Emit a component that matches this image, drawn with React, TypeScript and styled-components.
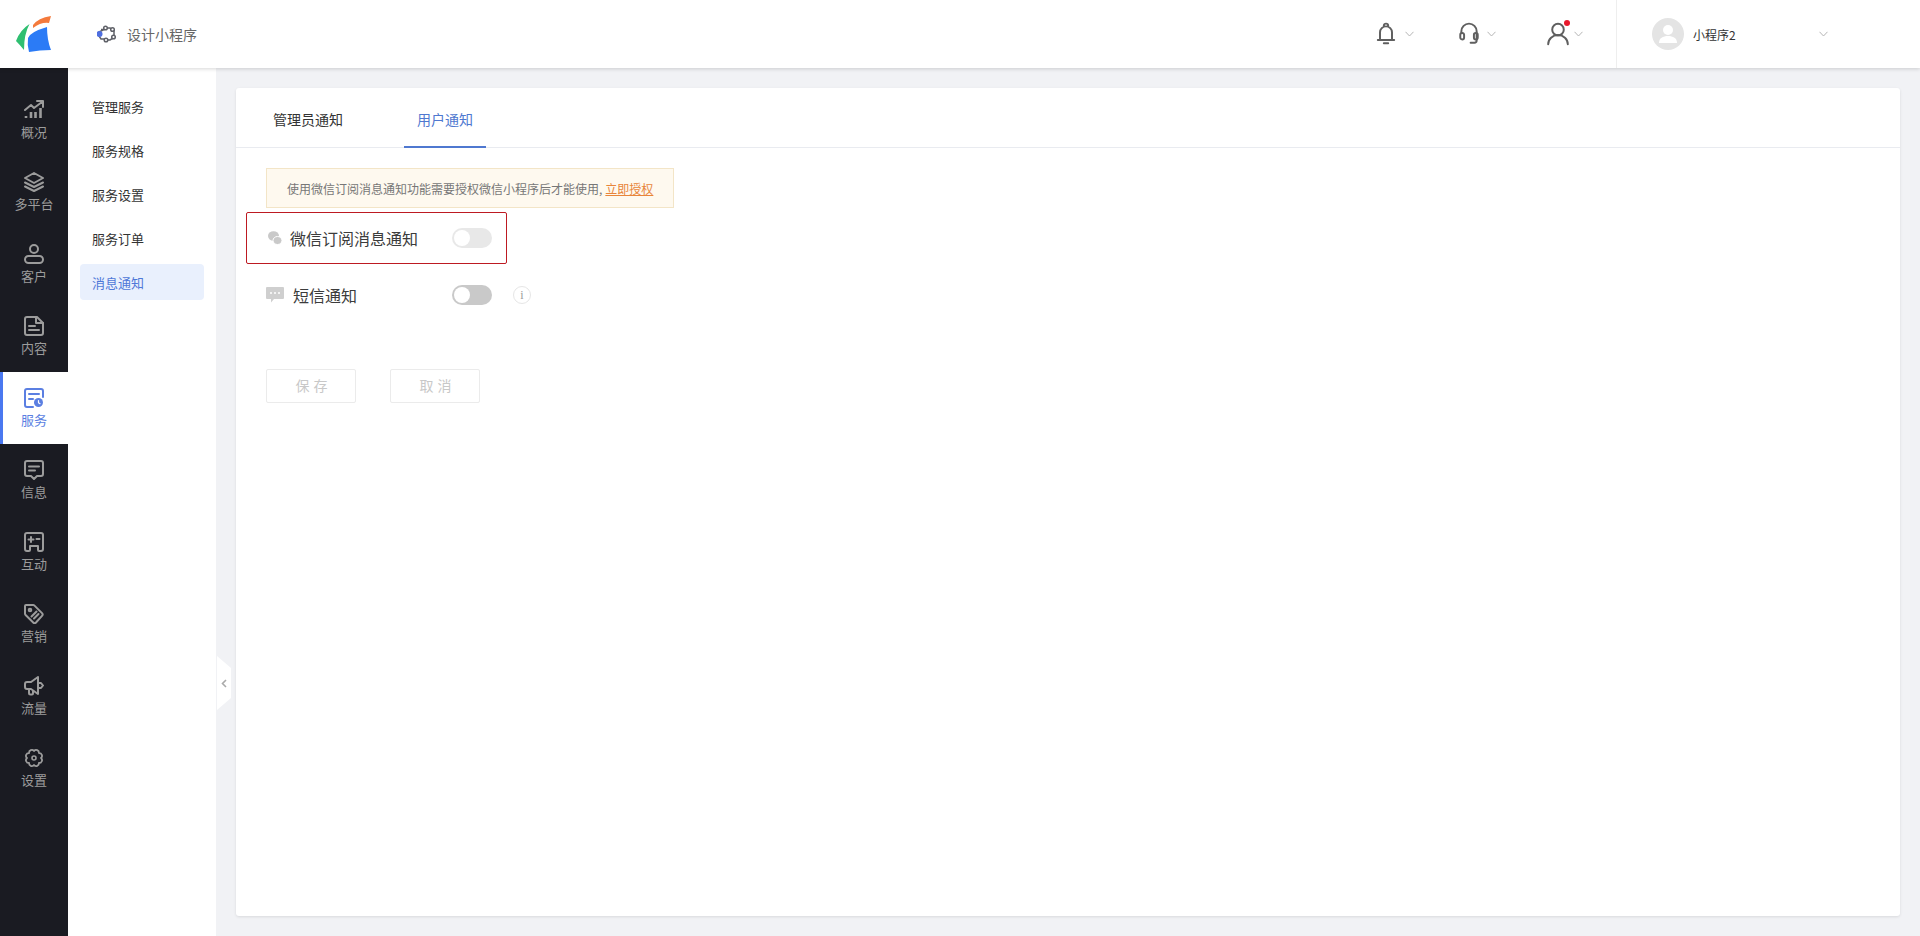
import { FunctionComponent, ReactNode } from "react";
import styled, { createGlobalStyle } from "styled-components";

const GlobalStyle = createGlobalStyle`
  html, body {
    margin: 0;
    padding: 0;
    height: 100%;
    overflow: hidden;
    background: #f1f2f5;
    font-family: "Noto Sans CJK SC", "Noto Sans", "Liberation Sans", sans-serif;
  }
  #root {
    height: 100%;
  }
  * {
    box-sizing: border-box;
  }
`;

const Page = styled.div`
  display: flex;
  flex-direction: column;
  width: 1920px;
  height: 936px;
`;
const Header = styled.header`
  position: relative;
  z-index: 2;
  flex: 0 0 68px;
  display: flex;
  align-items: stretch;
  background: #fff;
  box-shadow: 0 1px 4px rgba(0, 0, 0, 0.16);
`;
const LogoBox = styled.div`
  flex: 0 0 97px;
  display: flex;
  align-items: center;
  padding-left: 14px;
`;
const ProjectName = styled.div`
  display: flex;
  align-items: center;
  gap: 10px;
  font-size: 14px;
  color: #666;
`;
const Spacer = styled.div`
  flex: 1;
`;
const Action = styled.div<{ $width: number; $gap: number }>`
  position: relative;
  width: ${(p) => p.$width}px;
  display: flex;
  align-items: center;
  gap: ${(p) => p.$gap}px;
`;
const RedDot = styled.span`
  position: absolute;
  top: 20px;
  left: 17px;
  width: 6px;
  height: 6px;
  border-radius: 50%;
  background: #e8192c;
`;
const Account = styled.div`
  flex: 0 0 304px;
  display: flex;
  align-items: center;
  padding-left: 35px;
  border-left: 1px solid #eeeeee;
  font-size: 12px;
  color: #333;
`;
const AccountName = styled.div`
  width: 126px;
  margin-left: 9px;
`;
const Body = styled.div`
  flex: 1;
  min-height: 0;
  display: flex;
`;
const Rail = styled.nav`
  flex: 0 0 68px;
  padding-top: 16px;
  background: #1a1b22;
`;
const RailItem = styled.div<{ $active?: boolean }>`
  height: 72px;
  display: flex;
  flex-direction: column;
  align-items: center;
  padding-top: 16px;
  padding-right: 3px;
  gap: 3px;
  font-size: 13px;
  line-height: 18px;
  color: ${(p) => (p.$active ? "#5b7fe2" : "#9c9c9c")};
  background: ${(p) => (p.$active ? "#fff" : "transparent")};
  border-left: 3px solid ${(p) => (p.$active ? "#4a78f0" : "transparent")};
`;
const SubNav = styled.nav`
  flex: 0 0 148px;
  display: flex;
  flex-direction: column;
  gap: 8px;
  padding: 20px 12px 0;
  background: #fff;
`;
const SubItem = styled.div<{ $active?: boolean }>`
  height: 36px;
  display: flex;
  align-items: center;
  padding-left: 12px;
  border-radius: 4px;
  font-size: 13px;
  color: ${(p) => (p.$active ? "#4f78d8" : "#333")};
  background: ${(p) => (p.$active ? "#e9f0fd" : "transparent")};
`;
const Main = styled.main`
  position: relative;
  flex: 1;
  display: flex;
  padding: 20px;
  background: #f1f2f5;
`;
const CollapseHandle = styled.div`
  position: absolute;
  top: 588px;
  left: 1px;
  width: 14px;
  height: 54px;
  display: flex;
  align-items: center;
  justify-content: center;
  background: #fff;
  clip-path: polygon(0 0, 100% 22%, 100% 78%, 0 100%);
`;
const Card = styled.section`
  flex: 1;
  background: #fff;
  border-radius: 3px;
  box-shadow: 0 1px 3px rgba(0, 0, 0, 0.1);
`;
const TabBar = styled.div`
  height: 60px;
  display: flex;
  gap: 48px;
  padding-left: 24px;
  border-bottom: 1px solid #e9ebf0;
`;
const Tab = styled.div<{ $active?: boolean }>`
  height: 60px;
  display: flex;
  align-items: center;
  padding: 3px 13px 0;
  font-size: 14px;
  color: ${(p) => (p.$active ? "#4f78d0" : "#333")};
  border-bottom: 2px solid ${(p) => (p.$active ? "#4f78d0" : "transparent")};
`;
const Content = styled.div`
  padding: 20px 30px 0;
`;
const Notice = styled.div`
  width: 408px;
  height: 40px;
  display: flex;
  align-items: center;
  gap: 3px;
  padding-left: 20px;
  font-size: 12px;
  color: #777;
  background: #fef9ef;
  border: 1px solid #f3e5c7;
`;
const NoticeLink = styled.span`
  color: #e8853a;
  text-decoration: underline;
`;
const Row = styled.div<{ $highlight?: boolean }>`
  display: flex;
  align-items: center;
  height: ${(p) => (p.$highlight ? 52 : 58)}px;
  margin-top: ${(p) => (p.$highlight ? 4 : 2)}px;
  margin-left: ${(p) => (p.$highlight ? -20 : 0)}px;
  padding-left: ${(p) => (p.$highlight ? 21 : 0)}px;
  width: ${(p) => (p.$highlight ? "261px" : "auto")};
  border: ${(p) => (p.$highlight ? "1px solid #bd1a22" : "none")};
  border-radius: 2px;
`;
const RowLabel = styled.div<{ $width: number; $gap: number }>`
  width: ${(p) => p.$width}px;
  display: flex;
  align-items: center;
  gap: ${(p) => p.$gap}px;
  font-size: 16px;
  color: #3c3c3c;
`;
const Toggle = styled.div<{ $muted?: boolean }>`
  width: 40px;
  height: 20px;
  padding: 2px;
  border-radius: 10px;
  background: ${(p) => (p.$muted ? "#e8e8e8" : "#c9c9c9")};
`;
const Knob = styled.div`
  width: 16px;
  height: 16px;
  border-radius: 50%;
  background: #fff;
`;
const InfoMark = styled.span`
  width: 18px;
  height: 18px;
  margin-left: 21px;
  display: flex;
  align-items: center;
  justify-content: center;
  border: 1px solid #e6e6e6;
  border-radius: 50%;
  font-family: "Liberation Serif", serif;
  font-size: 12px;
  color: #999;
`;
const Actions = styled.div`
  display: flex;
  gap: 34px;
  margin-top: 45px;
`;
const GhostButton = styled.div`
  width: 90px;
  height: 34px;
  display: flex;
  align-items: center;
  justify-content: center;
  padding: 0 0 2px 5px;
  border: 1px solid #ebebeb;
  border-radius: 2px;
  font-size: 14px;
  letter-spacing: 4px;
  color: #c8c8c8;
`;
const RailIcon = styled.svg`
  width: 20px;
  height: 20px;
  flex: none;
  fill: none;
  stroke: currentColor;
  stroke-width: 2;
  stroke-linecap: round;
  stroke-linejoin: round;
`;
const TopIcon = styled.svg`
  width: 22px;
  height: 24px;
  flex: none;
  fill: none;
  stroke: #5f5f5f;
  stroke-width: 1.8;
  stroke-linecap: round;
  stroke-linejoin: round;
`;

const Chevron: FunctionComponent = () => (
  <svg width="9" height="6" viewBox="0 0 9 6" fill="none" stroke="#b5b5b5" strokeWidth="1">
    <path d="M0.5 0.8 4.5 5 8.5 0.8" />
  </svg>
);

const Logo: FunctionComponent = () => (
  <svg width="40" height="40" viewBox="14 14 40 40">
    <path d="M28 38Q30 32 47 27Q47 40 51 50Q40 50 29 52Q27 45 28 38Z" fill="#2b7bf6" />
    <path d="M33 25Q38 18 51 16L49 23Q41 22 33 28Z" fill="#f47a3c" />
    <path d="M16 41Q20 30 29.500 24Q24 34 24 50Q20 45 16 41Z" fill="#2fbf71" />
  </svg>
);

const railItems: { label: string; icon: ReactNode; active?: boolean }[] = [
  {
    label: "概况",
    icon: (
      <>
        <path d="M1 10 7 5l3 3 8-6M13 1h6v6" />
        <path d="M2 18v-2M7 18v-6M11.500 18v-6M16.500 18V8" strokeWidth="2.600" strokeLinecap="butt" />
      </>
    ),
  },
  {
    label: "多平台",
    icon: (
      <>
        <path d="M10 1 19 6l-9 5-9-5Z" />
        <path d="M1 10.500 10 15l9-4.500M1 14.500 10 19l9-4.500" />
      </>
    ),
  },
  {
    label: "客户",
    icon: (
      <>
        <circle cx="10" cy="5" r="4" />
        <path d="M4.500 12h11a3.500 3.500 0 0 1 0 7h-11a3.500 3.500 0 0 1 0-7Z" />
      </>
    ),
  },
  {
    label: "内容",
    icon: (
      <>
        <path d="M3 1h10l6 6v10a2 2 0 0 1-2 2H3a2 2 0 0 1-2-2V3a2 2 0 0 1 2-2Z" />
        <path d="M12 1v6h7M5 10h6M5 14h10" />
      </>
    ),
  },
  {
    label: "服务",
    active: true,
    icon: (
      <>
        <path d="M9 19H3a2 2 0 0 1-2-2V3a2 2 0 0 1 2-2h14a2 2 0 0 1 2 2v6" />
        <path d="M5 6h10M5 11h4" />
        <circle cx="14.500" cy="14.500" r="4.500" fill="currentColor" stroke="none" />
        <path d="M14.500 12.500v2.200l1.500 1" stroke="#fff" strokeWidth="1.200" />
      </>
    ),
  },
  {
    label: "信息",
    icon: (
      <>
        <path d="M3 1h14a2 2 0 0 1 2 2v11a2 2 0 0 1-2 2h-4l-3 3-3-3H3a2 2 0 0 1-2-2V3a2 2 0 0 1 2-2Z" />
        <path d="M5 6.500h10M5 10.500h6" />
      </>
    ),
  },
  {
    label: "互动",
    icon: (
      <>
        <path d="M3 1h14a2 2 0 0 1 2 2v14a2 2 0 0 1-2 2h-2a1 1 0 0 1-1-1v-4H6v4a1 1 0 0 1-1 1H3a2 2 0 0 1-2-2V3a2 2 0 0 1 2-2Z" />
        <path d="M4.500 7.500h5M7 5v5M12.500 7h3" />
      </>
    ),
  },
  {
    label: "营销",
    icon: (
      <>
        <path d="M2 1h7a2 2 0 0 1 1.500.6l7.500 7.500a2 2 0 0 1 0 2.800L12 18.500a2 2 0 0 1-2.800 0L1.600 11A2 2 0 0 1 1 9.500V2a1 1 0 0 1 1-1Z" />
        <circle cx="6" cy="6" r="1.300" />
        <path d="M7.500 12.500 12.500 7.500M10 14.500 14.500 10" />
      </>
    ),
  },
  {
    label: "流量",
    icon: (
      <>
        <path d="M14 1 7 6H3a2 2 0 0 0-2 2v3a2 2 0 0 0 2 2h4l7 5Z" />
        <path d="M14 7h3l2 2.500-2 2.500h-3M5 13v4a1.500 1.500 0 0 0 1.500 1.500H8a1 1 0 0 0 1-1V15" />
      </>
    ),
  },
  {
    label: "设置",
    icon: (
      <>
        <path
          d="M17 10A2.800 2.800 0 0 1 14.950 14.950A2.800 2.800 0 0 1 10 17A2.800 2.800 0 0 1 5.050 14.950A2.800 2.800 0 0 1 3 10A2.800 2.800 0 0 1 5.050 5.050A2.800 2.800 0 0 1 10 3A2.800 2.800 0 0 1 14.950 5.050A2.800 2.800 0 0 1 17 10Z"
          strokeWidth="1.800"
        />
        <circle cx="10" cy="10" r="2" strokeWidth="1.600" />
      </>
    ),
  },
];

const subItems = ["管理服务", "服务规格", "服务设置", "服务订单", "消息通知"];

const App: FunctionComponent = () => {
  return (
    <Page>
      <GlobalStyle />
      <Header>
        <LogoBox>
          <Logo />
        </LogoBox>
        <ProjectName>
          <svg width="20" height="18" viewBox="0 0 20 18" fill="none" stroke="#5f6168" strokeWidth="1.500">
            <path d="M4 4.500h3M10 3h3l4 2.500v7L13 15h-3l-3-1H4l-2-3V7Z" />
            <circle cx="8.500" cy="3" r="1.800" fill="#fff" />
            <circle cx="15.500" cy="4.500" r="1.800" fill="#fff" />
            <circle cx="9" cy="15" r="1.800" fill="#fff" />
            <circle cx="16.500" cy="12" r="1.800" fill="#fff" />
            <circle cx="2.500" cy="9" r="2.300" fill="#4f6fe0" stroke="#4f6fe0" />
          </svg>
          设计小程序
        </ProjectName>
        <Spacer />
        <Action $width={83} $gap={8}>
          <TopIcon viewBox="0 0 18 22">
            <path d="M7 3.500a2 2 0 0 1 4 0M3.500 16V9.500a5.500 5.500 0 0 1 11 0V16M1.500 16.500h15M7 19.500h4" />
          </TopIcon>
          <Chevron />
        </Action>
        <Action $width={89} $gap={7}>
          <TopIcon viewBox="0 0 18 22">
            <path d="M2 10V8.500a7 7 0 0 1 14 0V17a2 2 0 0 1-2 2h-3.500" />
            <rect x="1" y="10" width="3.500" height="6" rx="1.700" />
            <rect x="13.500" y="10" width="3.500" height="6" rx="1.700" />
          </TopIcon>
          <Chevron />
        </Action>
        <Action $width={69} $gap={5}>
          <TopIcon viewBox="0 0 20 22">
            <circle cx="10" cy="7" r="5.300" />
            <path d="M1 20.500a9 8.500 0 0 1 18 0" />
          </TopIcon>
          <RedDot />
          <Chevron />
        </Action>
        <Account>
          <svg width="32" height="32" viewBox="0 0 32 32">
            <circle cx="16" cy="16" r="16" fill="#e4e4e4" />
            <circle cx="16" cy="12" r="5" fill="#fff" />
            <path d="M7 25c0-5 4-7 9-7s9 2 9 7Z" fill="#fff" />
          </svg>
          <AccountName>小程序2</AccountName>
          <Chevron />
        </Account>
      </Header>
      <Body>
        <Rail>
          {railItems.map((item) => (
            <RailItem key={item.label} $active={item.active}>
              <RailIcon viewBox="0 0 20 20">{item.icon}</RailIcon>
              {item.label}
            </RailItem>
          ))}
        </Rail>
        <SubNav>
          {subItems.map((item) => (
            <SubItem key={item} $active={item === "消息通知"}>
              {item}
            </SubItem>
          ))}
        </SubNav>
        <Main>
          <CollapseHandle>
            <svg width="6" height="9" viewBox="0 0 6 9" fill="none" stroke="#aaa" strokeWidth="1.600">
              <path d="M5 1 1.500 4.500 5 8" />
            </svg>
          </CollapseHandle>
          <Card>
            <TabBar>
              <Tab>管理员通知</Tab>
              <Tab $active>用户通知</Tab>
            </TabBar>
            <Content>
              <Notice>
                <span>使用微信订阅消息通知功能需要授权微信小程序后才能使用,</span>
                <NoticeLink>立即授权</NoticeLink>
              </Notice>
              <Row $highlight>
                <RowLabel $width={184} $gap={8}>
                  <svg width="14" height="14" viewBox="0 0 14 14" fill="#c9c9c9">
                    <ellipse cx="5.500" cy="5" rx="5.500" ry="4.800" />
                    <ellipse cx="9.500" cy="9.500" rx="4.500" ry="4" stroke="#fff" strokeWidth="1" />
                  </svg>
                  微信订阅消息通知
                </RowLabel>
                <Toggle $muted>
                  <Knob />
                </Toggle>
              </Row>
              <Row>
                <RowLabel $width={186} $gap={9}>
                  <svg width="18" height="16" viewBox="0 0 18 16">
                    <path d="M1 0h16a1 1 0 0 1 1 1v10a1 1 0 0 1-1 1H8l-3 3.500V12H1a1 1 0 0 1-1-1V1a1 1 0 0 1 1-1Z" fill="#cfcfcf" />
                    <circle cx="5" cy="6" r="1" fill="#fff" />
                    <circle cx="9" cy="6" r="1" fill="#fff" />
                    <circle cx="13" cy="6" r="1" fill="#fff" />
                  </svg>
                  短信通知
                </RowLabel>
                <Toggle>
                  <Knob />
                </Toggle>
                <InfoMark>i</InfoMark>
              </Row>
              <Actions>
                <GhostButton>保存</GhostButton>
                <GhostButton>取消</GhostButton>
              </Actions>
            </Content>
          </Card>
        </Main>
      </Body>
    </Page>
  );
};

export default App;
